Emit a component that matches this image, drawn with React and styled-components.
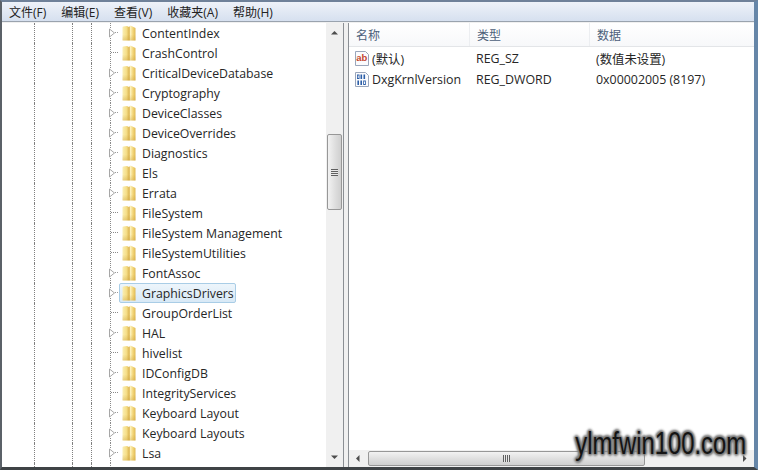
import React from "react";
import styled, { createGlobalStyle } from "styled-components";

const GlobalStyle = createGlobalStyle`
  html, body { margin: 0; padding: 0; background: #fff; }
  body { font-family: "Open Sans", "Noto Sans CJK SC", sans-serif; }
`;

const KEYS = [
  ["ContentIndex", true],
  ["CrashControl", false],
  ["CriticalDeviceDatabase", true],
  ["Cryptography", true],
  ["DeviceClasses", true],
  ["DeviceOverrides", true],
  ["Diagnostics", true],
  ["Els", true],
  ["Errata", true],
  ["FileSystem", false],
  ["FileSystem Management", false],
  ["FileSystemUtilities", false],
  ["FontAssoc", true],
  ["GraphicsDrivers", true, true],
  ["GroupOrderList", false],
  ["HAL", true],
  ["hivelist", false],
  ["IDConfigDB", true],
  ["IntegrityServices", false],
  ["Keyboard Layout", true],
  ["Keyboard Layouts", true],
  ["Lsa", true],
];

const MENUS = ["文件(F)", "编辑(E)", "查看(V)", "收藏夹(A)", "帮助(H)"];

const Connector = ({ expandable }) => (
  <ConnectorSvg width="10" height="20" viewBox="0 0 10 20">
    {expandable ? (
      <>
        <path d="M1.5 0V5M1.5 15V20" stroke="#8a8a8a" strokeDasharray="1 1" />
        <path d="M0.5 6v8l5-4z" fill="#fff" stroke="#a6a6a6" />
        <path d="M6 9.5h4" stroke="#9a9a9a" strokeDasharray="1 1" />
      </>
    ) : (
      <path d="M1.5 0V20M2 9.5h8" stroke="#8a8a8a" strokeDasharray="1 1" />
    )}
  </ConnectorSvg>
);

const Folder = () => (
  <svg width="14" height="16" viewBox="0 0 14 16">
    <defs>
      <linearGradient id="fold" x1="0" y1="0" x2="1" y2="0">
        <stop offset="0" stopColor="#f9eeb4" />
        <stop offset="0.3" stopColor="#f6df8a" />
        <stop offset="0.52" stopColor="#dcb552" />
        <stop offset="0.6" stopColor="#fdf3c0" />
        <stop offset="0.8" stopColor="#f3d679" />
        <stop offset="1" stopColor="#dfb955" />
      </linearGradient>
      <linearGradient id="shade" x1="0" y1="0" x2="0" y2="1">
        <stop offset="0.6" stopColor="#c79a30" stopOpacity="0" />
        <stop offset="1" stopColor="#c79a30" stopOpacity="0.35" />
      </linearGradient>
    </defs>
    <path d="M0.5 2.5Q0.5 1.5 1.5 1.5L5 1 7 2 8.5 0.5 13.5 3V15.5H1Q0.5 15.5 0.5 15z" fill="url(#fold)" />
    <path d="M0.5 2.5Q0.5 1.5 1.5 1.5L5 1 7 2 8.5 0.5 13.5 3V15.5H1Q0.5 15.5 0.5 15z" fill="url(#shade)" />
  </svg>
);

const StringIcon = () => (
  <svg width="16" height="17" viewBox="0 0 16 17">
    <path d="M1.5 1.5h10l3 3v11h-13z" fill="#fbfbfd" stroke="#9aa6bb" />
    <text x="2.2" y="11" fontSize="9.5" fontWeight="700" fontFamily="Liberation Sans, sans-serif" fill="#c4452f">ab</text>
  </svg>
);

const BinaryIcon = () => (
  <svg width="16" height="17" viewBox="0 0 16 17">
    <path d="M1.5 1.5h10l3 3v11h-13z" fill="#fbfbfd" stroke="#9aa6bb" />
    <g fill="#2c5fa8">
      <path d="M3 3.5h2.5v4.5H3zM3.8 4.4v2.7h.9V4.4z" fillRule="evenodd" />
      <rect x="6.5" y="3.5" width="1.6" height="4.5" />
      <rect x="9.5" y="3.5" width="1.6" height="4.5" />
      <rect x="3.4" y="9.5" width="1.6" height="4.5" />
      <rect x="6.4" y="9.5" width="1.6" height="4.5" />
      <path d="M9.2 9.5h2.6V14H9.2zM10 10.4v2.7h1v-2.7z" fillRule="evenodd" />
    </g>
  </svg>
);

const Arrow = ({ dir }) => {
  const shape = {
    up: "M1 5.5L4.5 2 8 5.5z",
    down: "M1 2.5h7L4.5 6z",
    left: "M5.5 1v7L2 4.5z",
    right: "M3 1v7l3.5-3.5z",
  }[dir];
  return (
    <svg width="9" height="9" viewBox="0 0 9 9">
      <path d={shape} fill="#4d4d4d" />
    </svg>
  );
};

export default function App() {
  return (
    <>
      <GlobalStyle />
      <Window>
        <MenuBar>
          {MENUS.map((m) => (
            <MenuItem key={m}>{m}</MenuItem>
          ))}
        </MenuBar>
        <Panes>
          <TreePane>
            <Tree>
              {KEYS.map(([name, expandable, selected]) => (
                <TreeRow key={name}>
                  <Guide $w={38} />
                  <Guide $w={19} />
                  <Guide $w={18} />
                  <Connector expandable={expandable} />
                  <Node $selected={selected}>
                    <Folder />
                    <NodeLabel>{name}</NodeLabel>
                  </Node>
                </TreeRow>
              ))}
              <TreeRow>
                <Guide $w={38} />
                <Guide $w={19} />
                <Guide $w={18} />
                <Connector />
              </TreeRow>
            </Tree>
            <VScroll>
              <ScrollBtn $h={20}>
                <Arrow dir="up" />
              </ScrollBtn>
              <VThumbGap $h={91} />
              <VThumb>
                <Grip $vertical />
              </VThumb>
              <VThumbGap $h={0} $grow />
              <ScrollBtn $h={20}>
                <Arrow dir="down" />
              </ScrollBtn>
            </VScroll>
          </TreePane>
          <Splitter />
          <ListPane>
            <Header>
              <HeaderCell $w={121}>名称</HeaderCell>
              <HeaderCell $w={120}>类型</HeaderCell>
              <HeaderCell $w={160} $last>数据</HeaderCell>
            </Header>
            <Rows>
              <ValueRow>
                <NameCell>
                  <StringIcon />
                  <span>(默认)</span>
                </NameCell>
                <TypeCell>REG_SZ</TypeCell>
                <DataCell>(数值未设置)</DataCell>
              </ValueRow>
              <ValueRow>
                <NameCell>
                  <BinaryIcon />
                  <span>DxgKrnlVersion</span>
                </NameCell>
                <TypeCell>REG_DWORD</TypeCell>
                <DataCell>0x00002005 (8197)</DataCell>
              </ValueRow>
            </Rows>
            <HScroll>
              <HButton>
                <Arrow dir="left" />
              </HButton>
              <HThumb>
                <Grip />
              </HThumb>
              <HTrack />
              <HButton>
                <Arrow dir="right" />
              </HButton>
            </HScroll>
          </ListPane>
        </Panes>
        <Watermark>
          <WatermarkText>ylmfwin100.com</WatermarkText>
        </Watermark>
      </Window>
    </>
  );
}

const Window = styled.div`
  position: relative;
  width: 758px;
  height: 470px;
  box-sizing: border-box;
  display: flex;
  flex-direction: column;
  overflow: hidden;
  background: #f0f0f0;
  border-top: 2px solid #6f8199;
  border-left: 2px solid #5b6168;
  border-right: 4px solid #6686a8;
  border-bottom: 3px solid #3f4346;
`;

const MenuBar = styled.div`
  height: 19px;
  flex: none;
  display: flex;
  align-items: center;
  gap: 15px;
  padding-left: 7px;
  background: linear-gradient(#eef2f9, #d6e0ef);
  border-bottom: 1px solid #9aa3ae;
`;

const MenuItem = styled.span`
  font-size: 12px;
  color: #222;
  white-space: nowrap;
`;

const Panes = styled.div`
  flex: 1;
  min-height: 0;
  display: flex;
  padding-top: 1px;
  background: #f0f0f0;
`;

const TreePane = styled.div`
  width: 342px;
  flex: none;
  display: flex;
  background: #fff;
  border-right: 1px solid #8b8f94;
  box-sizing: border-box;
`;

const Tree = styled.div`
  flex: 1;
  min-width: 0;
  overflow: hidden;
`;

const TreeRow = styled.div`
  height: 20px;
  display: flex;
  align-items: center;
  padding-left: 32px;
`;

const Guide = styled.span`
  width: ${(p) => p.$w}px;
  align-self: stretch;
  flex: none;
  box-sizing: border-box;
  border-left: 1px dotted #808080;
`;

const ConnectorSvg = styled.svg`
  flex: none;
`;

const Node = styled.div`
  height: 20px;
  box-sizing: border-box;
  display: flex;
  align-items: center;
  padding: 0 1px 0 2px;
  gap: 6px;
  border: 1px solid ${(p) => (p.$selected ? "#a9cde6" : "transparent")};
  border-radius: 2px;
  background: ${(p) => (p.$selected ? "linear-gradient(#edf5fb, #d8e9f6)" : "transparent")};
`;

const NodeLabel = styled.span`
  font-size: 12.3px;
  color: #262626;
  white-space: nowrap;
`;

const VScroll = styled.div`
  width: 17px;
  flex: none;
  display: flex;
  flex-direction: column;
  background: #f0f0f0;
`;

const ScrollBtn = styled.div`
  height: ${(p) => p.$h}px;
  flex: none;
  display: flex;
  align-items: center;
  justify-content: center;
`;

const VThumbGap = styled.div`
  height: ${(p) => p.$h}px;
  flex: ${(p) => (p.$grow ? 1 : "none")};
`;

const VThumb = styled.div`
  height: 76px;
  flex: none;
  box-sizing: border-box;
  margin: 0 1px;
  display: flex;
  align-items: center;
  justify-content: center;
  border: 1px solid #979797;
  border-radius: 2px;
  background: linear-gradient(90deg, #f2f2f2, #dcdcdc 60%, #cfcfcf);
`;

const Grip = styled.span`
  display: block;
  background: repeating-linear-gradient(
    ${(p) => (p.$vertical ? "180deg" : "90deg")},
    #5f5f5f 0 1px,
    #e8e8e8 1px 2px
  );
  width: 7px;
  height: 7px;
`;

const Splitter = styled.div`
  width: 4px;
  flex: none;
  background: #f0f0f0;
`;

const ListPane = styled.div`
  flex: 1;
  min-width: 0;
  display: flex;
  flex-direction: column;
  background: #fff;
  border-left: 1px solid #8b8f94;
`;

const Header = styled.div`
  height: 23px;
  flex: none;
  display: flex;
  background: linear-gradient(#ffffff, #f7f8fa);
  border-bottom: 1px solid #e3e5e8;
`;

const HeaderCell = styled.div`
  width: ${(p) => p.$w}px;
  flex: ${(p) => (p.$last ? 1 : "none")};
  box-sizing: border-box;
  display: flex;
  align-items: center;
  padding-left: 7px;
  font-size: 12px;
  color: #4c607a;
  border-right: ${(p) => (p.$last ? "none" : "1px solid #eceef1")};
`;

const Rows = styled.div`
  flex: 1;
  min-height: 0;
  padding-top: 1px;
`;

const ValueRow = styled.div`
  height: 21px;
  display: flex;
  align-items: center;
  font-size: 12.4px;
  color: #262626;
`;

const NameCell = styled.div`
  width: 121px;
  flex: none;
  box-sizing: border-box;
  padding-left: 5px;
  display: flex;
  align-items: center;
  gap: 2px;
  white-space: nowrap;
`;

const TypeCell = styled.div`
  width: 120px;
  flex: none;
  padding-left: 6px;
  box-sizing: border-box;
`;

const DataCell = styled.div`
  flex: 1;
  padding-left: 6px;
`;

const HScroll = styled.div`
  height: 17px;
  flex: none;
  display: flex;
  background: #f0f0f0;
`;

const HButton = styled.div`
  width: 19px;
  flex: none;
  display: flex;
  align-items: center;
  justify-content: center;
`;

const HThumb = styled.div`
  width: 277px;
  flex: none;
  box-sizing: border-box;
  margin: 1px 0;
  display: flex;
  align-items: center;
  justify-content: center;
  border: 1px solid #979797;
  border-radius: 2px;
  background: linear-gradient(#f2f2f2, #dcdcdc 60%, #cfcfcf);
`;

const HTrack = styled.div`
  flex: 1;
`;

const Watermark = styled.div`
  position: absolute;
  right: 3px;
  bottom: 1px;
  width: 180px;
  height: 46px;
  display: flex;
  align-items: center;
  justify-content: center;
`;

const WatermarkText = styled.span`
  font-family: "Liberation Sans", sans-serif;
  font-size: 32px;
  color: #141414;
  white-space: nowrap;
  transform: scaleX(0.745);
  text-shadow: 0 0 2px #777, 0 0 3px #777, 1px 1px 3px #777, -1px -1px 3px #777, 2px 0 3px #888, -2px 0 3px #888, 0 2px 3px #888, 0 -2px 3px #888;
`;
